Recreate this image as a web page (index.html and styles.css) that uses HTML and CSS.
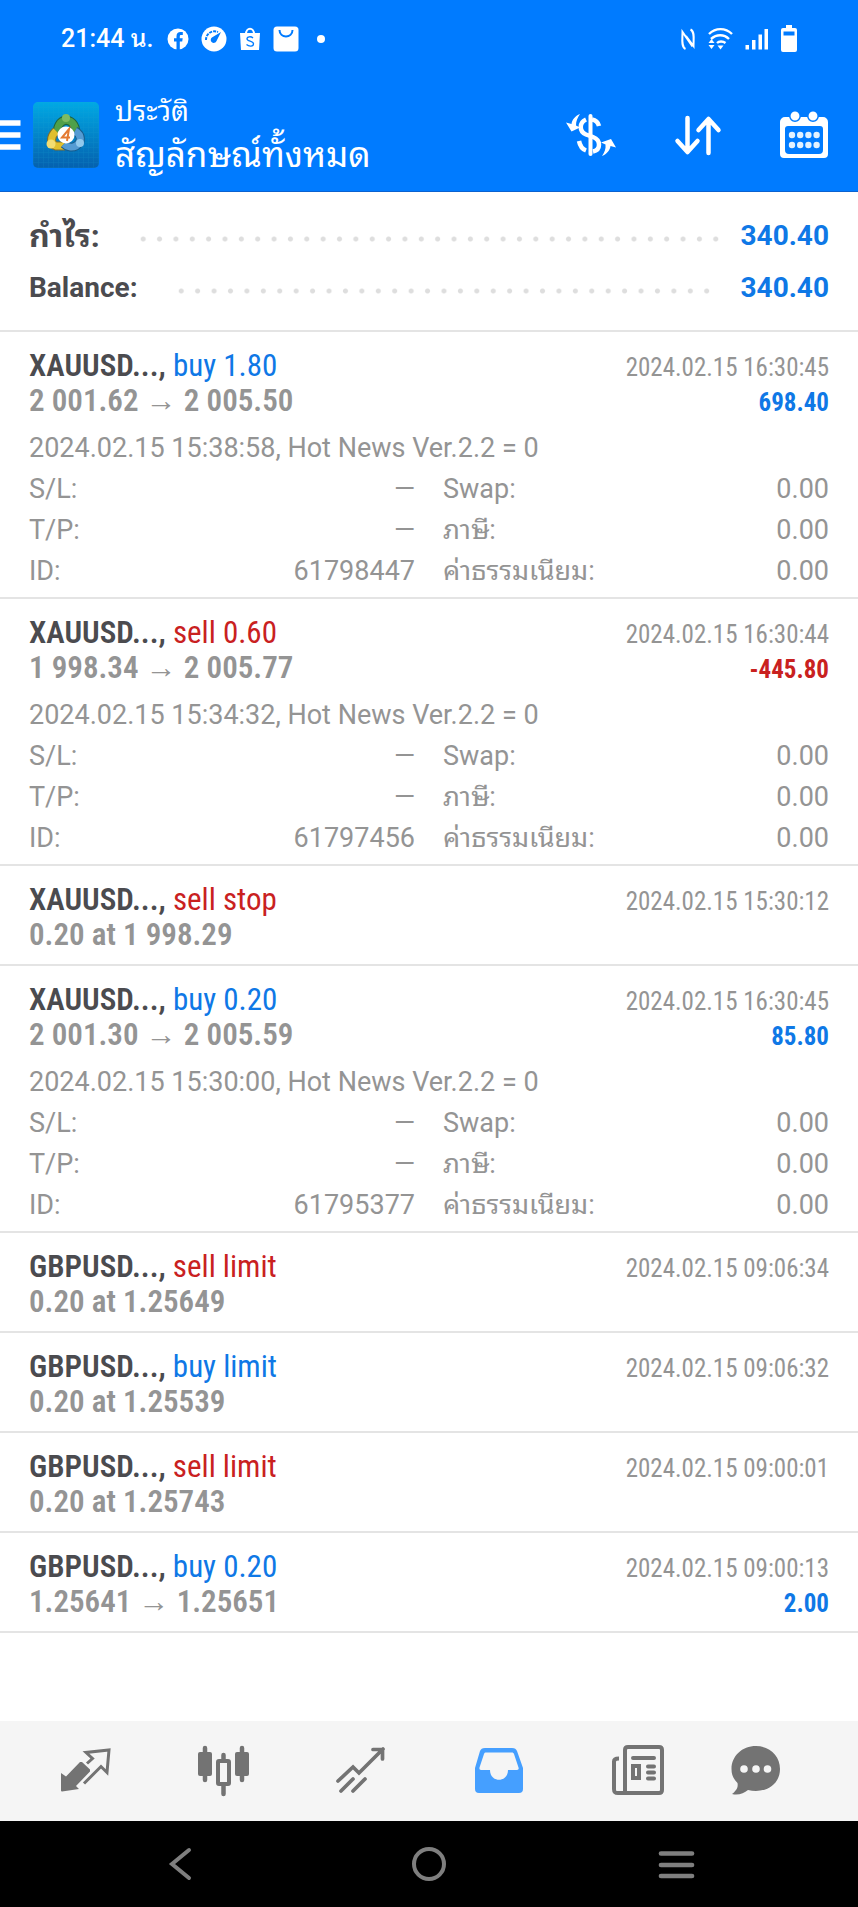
FILE: index.html
```
<!DOCTYPE html>
<html lang="th">
<head>
<meta charset="utf-8">
<meta name="viewport" content="width=device-width, initial-scale=1">
<title>ประวัติ</title>
<link rel="stylesheet" href="styles.css">
</head>
<body>
<header class="top">
  <div class="status">
    <span class="clock">21:44 น.</span>
    <div class="status-apps">
      <svg width="22" height="28" viewBox="0 0 22 28"><circle cx="11" cy="14" r="10.5" fill="#fff"/><path d="M9.500 25v-8.500H7v-3.200h2.500v-2c0-3 1.600-4.300 4-4.300h2.300v3H14.200c-1 0-1.400.5-1.400 1.400v1.900h2.900l-.5 3.200h-2.400V25z" fill="#007bff"/></svg>
      <svg width="26" height="28" viewBox="0 0 26 28"><circle cx="13" cy="14" r="12.500" fill="#fff"/><path d="M5 15a8.500 8.500 0 0 1 12-8" fill="none" stroke="#007bff" stroke-width="2" stroke-dasharray="3 1"/><path d="M20 7l-4.500 9a3 3 0 1 1-4.600-3.500z" fill="#007bff"/></svg>
      <svg width="22" height="28" viewBox="0 0 22 28"><path d="M7 9c0-7 8-7 8 0" fill="none" stroke="#fff" stroke-width="2"/><path d="M1 8h20l-1 17H2z" fill="#fff"/><path d="M14 13c-2-2-6-1.500-6 .8 0 2.800 6.500 2 6.500 5s-4.500 3-7 .8" fill="none" stroke="#007bff" stroke-width="1.300"/></svg>
      <svg width="26" height="28" viewBox="0 0 26 28"><rect x=".5" y="1.500" width="25" height="25" rx="3.500" fill="#fff"/><path d="M6.500 5c0 8.500 13 8.500 13 0" fill="none" stroke="#007bff" stroke-width="2"/></svg>
    </div>
    <span class="more-dot"></span>
    <div class="status-system">
      <svg width="14" height="28" viewBox="0 0 14 28"><path d="M4.500 24C0 22 1.500 14 1.500 7l10 14.500M9.500 4.500c4.500 2 3 9.500 3 16.500L5 11" fill="none" stroke="#fff" stroke-width="2"/></svg>
      <svg width="26" height="28" viewBox="0 0 26 28"><g fill="none" stroke="#fff" stroke-width="2.400"><path d="M2 9c6.500-6.500 16.500-6.500 23 0"/><path d="M4 14c5.500-5 13-5 18 0"/><path d="M10 18c2-2 6-2 8.500 0"/></g><path d="M10.500 20.500h6l-3 4zM1.500 18l3-4 3 4zM1.500 20h6l-3 4z" fill="#fff"/></svg>
      <svg width="24" height="28" viewBox="0 0 24 28"><path d="M.5 20h3.500v4.500H.5zM7 15h3.500v9.500H7zM13.500 9.500H17v15h-3.500zM19.500 4H23v20.500h-3.500z" fill="#fff"/></svg>
      <svg width="16" height="28" viewBox="0 0 16 28"><path d="M5 0h6v3h3a2 2 0 0 1 2 2v20a2 2 0 0 1-2 2H2a2 2 0 0 1-2-2V5a2 2 0 0 1 2-2h3z" fill="#fff"/><path d="M2.500 6.500h11v4h-11z" fill="#007bff"/></svg>
    </div>
  </div>
  <div class="toolbar">
    <button class="icon-btn" aria-label="เมนู"><svg width="21" height="32" viewBox="0 0 21 32"><path d="M0 4h20.500M0 16h20.500M0 28h20.500" stroke="#fff" stroke-width="5.500"/></svg></button>
    <svg class="logo" width="66" height="66" viewBox="0 0 66 66">
      <defs><linearGradient id="sky" x1="0" y1="0" x2="0" y2="1"><stop offset="0" stop-color="#00a9e4"/><stop offset="1" stop-color="#0560ae"/></linearGradient>
      <pattern id="mesh" width="5" height="5" patternUnits="userSpaceOnUse"><path d="M0 0h5M0 0v5" stroke="#1fa5cf" stroke-width="1" opacity=".25"/></pattern></defs>
      <rect width="66" height="66" rx="5" fill="url(#sky)"/><rect width="66" height="66" rx="5" fill="url(#mesh)"/>
      <path d="M25 33c-2-8 2-14 8-15 7 1 11 7 9 15" fill="none" stroke="#1e6340" stroke-width="9"/><path d="M25 33c-2-8 2-14 8-15 7 1 11 7 9 15" fill="none" stroke="#4fa04a" stroke-width="7"/>
      <path d="M23 29c-6 6-6 13 0 15h9" fill="none" stroke="#806e2c" stroke-width="9"/><path d="M23 29c-6 6-6 13 0 15h9" fill="none" stroke="#e0bf2e" stroke-width="7"/>
      <path d="M42 29c7 4 7 11 1 15-4 2-9 1-12-2" fill="none" stroke="#185c8a" stroke-width="9"/><path d="M42 29c7 4 7 11 1 15-4 2-9 1-12-2" fill="none" stroke="#549bd3" stroke-width="7"/>
      <circle cx="33" cy="16" r="4" fill="#7dbb62"/><circle cx="18" cy="42" r="4.500" fill="#f2dc72"/><circle cx="47" cy="41" r="4" fill="#91c9ed"/>
      <circle cx="33" cy="33" r="8.500" fill="#fff"/><path d="M34 39l2-12-7 8.500h8" fill="none" stroke="#e47a32" stroke-width="2"/>
    </svg>
    <div class="heading">
      <span class="screen">ประวัติ</span>
      <h1 class="scope">สัญลักษณ์ทั้งหมด</h1>
    </div>
    <div class="actions">
      <button class="icon-btn" aria-label="กำไร"><svg width="50" height="48" viewBox="0 0 50 48"><path d="M24.500 5v38" stroke="#fff" stroke-width="4" stroke-linecap="round"/><path d="M33 15c-1-4-4-6-7-6.500M20 8.500c-7 3-7 12 0 15l7 2.500c8 3 8 13 0 14.500M13 30c1 5 3 8 7 9.500" fill="none" stroke="#fff" stroke-width="4.500"/><path d="M14 3C9 5 6 9 5.500 13L0 11.500 5.500 20.500 14 16.500 10 14.500C10 10 11.500 7 14 3zM36 45c5-2 8-6 8.500-10L50 36.500 45 28l-10 3.500 4.500 2C40 38 38.500 41 36 45z" fill="#fff"/></svg></button>
      <button class="icon-btn" aria-label="เรียงลำดับ"><svg width="46" height="48" viewBox="0 0 46 48"><path d="M12.500 7v33M2.500 30l10 11 10-11M33.500 42V9M23.500 19l10-11 10 11" fill="none" stroke="#fff" stroke-width="4.500" stroke-linecap="round" stroke-linejoin="round"/></svg></button>
      <button class="icon-btn" aria-label="ปฏิทิน"><svg width="48" height="48" viewBox="0 0 48 48"><path d="M5 6h38a5 5 0 0 1 5 5v32a4 4 0 0 1-4 4H4a4 4 0 0 1-4-4V11a5 5 0 0 1 5-5zM8 15a3 3 0 0 0-3 3v21a4 4 0 0 0 4 4h30a4 4 0 0 0 4-4V18a3 3 0 0 0-3-3z" fill="#fff" fill-rule="evenodd"/><g fill="#fff" stroke="#007bff" stroke-width="1.500"><circle cx="15" cy="5" r="5.200"/><circle cx="33" cy="5" r="5.200"/></g><path d="M12 24h25M12 34h25" stroke="#e2f1ff" stroke-width="6.400" stroke-linecap="round" stroke-dasharray="0 8.200"/></svg></button>
    </div>
  </div>
</header>

<main class="content">
  <dl class="summary">
    <div class="sum-row"><dt class="thai">กำไร:</dt><dd class="dots dots-profit"></dd><dd class="total">340.40</dd></div>
    <div class="sum-row"><dt>Balance:</dt><dd class="dots dots-balance"></dd><dd class="total">340.40</dd></div>
  </dl>

  <ul class="deals">
    <li class="deal deal-open">
      <div class="line"><span class="name"><b>XAUUSD...,</b> <span class="buy">buy 1.80</span></span><time class="time">2024.02.15 16:30:45</time></div>
      <div class="line"><span class="price">2 001.62 <span class="arrow">→</span> 2 005.50</span><span class="profit buy">698.40</span></div>
      <p class="note">2024.02.15 15:38:58, Hot News Ver.2.2 = 0</p>
      <dl class="facts">
        <div><dt>S/L:</dt><dd>—</dd></div><div><dt>Swap:</dt><dd>0.00</dd></div>
        <div><dt>T/P:</dt><dd>—</dd></div><div><dt>ภาษี:</dt><dd>0.00</dd></div>
        <div><dt>ID:</dt><dd>61798447</dd></div><div><dt>ค่าธรรมเนียม:</dt><dd>0.00</dd></div>
      </dl>
    </li>
    <li class="deal deal-open">
      <div class="line"><span class="name"><b>XAUUSD...,</b> <span class="sell">sell 0.60</span></span><time class="time">2024.02.15 16:30:44</time></div>
      <div class="line"><span class="price">1 998.34 <span class="arrow">→</span> 2 005.77</span><span class="profit sell">-445.80</span></div>
      <p class="note">2024.02.15 15:34:32, Hot News Ver.2.2 = 0</p>
      <dl class="facts">
        <div><dt>S/L:</dt><dd>—</dd></div><div><dt>Swap:</dt><dd>0.00</dd></div>
        <div><dt>T/P:</dt><dd>—</dd></div><div><dt>ภาษี:</dt><dd>0.00</dd></div>
        <div><dt>ID:</dt><dd>61797456</dd></div><div><dt>ค่าธรรมเนียม:</dt><dd>0.00</dd></div>
      </dl>
    </li>
    <li class="deal">
      <div class="line"><span class="name"><b>XAUUSD...,</b> <span class="sell">sell stop</span></span><time class="time">2024.02.15 15:30:12</time></div>
      <div class="line"><span class="price">0.20 at 1 998.29</span></div>
    </li>
    <li class="deal deal-open">
      <div class="line"><span class="name"><b>XAUUSD...,</b> <span class="buy">buy 0.20</span></span><time class="time">2024.02.15 16:30:45</time></div>
      <div class="line"><span class="price">2 001.30 <span class="arrow">→</span> 2 005.59</span><span class="profit buy">85.80</span></div>
      <p class="note">2024.02.15 15:30:00, Hot News Ver.2.2 = 0</p>
      <dl class="facts">
        <div><dt>S/L:</dt><dd>—</dd></div><div><dt>Swap:</dt><dd>0.00</dd></div>
        <div><dt>T/P:</dt><dd>—</dd></div><div><dt>ภาษี:</dt><dd>0.00</dd></div>
        <div><dt>ID:</dt><dd>61795377</dd></div><div><dt>ค่าธรรมเนียม:</dt><dd>0.00</dd></div>
      </dl>
    </li>
    <li class="deal">
      <div class="line"><span class="name"><b>GBPUSD...,</b> <span class="sell">sell limit</span></span><time class="time">2024.02.15 09:06:34</time></div>
      <div class="line"><span class="price">0.20 at 1.25649</span></div>
    </li>
    <li class="deal">
      <div class="line"><span class="name"><b>GBPUSD...,</b> <span class="buy">buy limit</span></span><time class="time">2024.02.15 09:06:32</time></div>
      <div class="line"><span class="price">0.20 at 1.25539</span></div>
    </li>
    <li class="deal">
      <div class="line"><span class="name"><b>GBPUSD...,</b> <span class="sell">sell limit</span></span><time class="time">2024.02.15 09:00:01</time></div>
      <div class="line"><span class="price">0.20 at 1.25743</span></div>
    </li>
    <li class="deal">
      <div class="line"><span class="name"><b>GBPUSD...,</b> <span class="buy">buy 0.20</span></span><time class="time">2024.02.15 09:00:13</time></div>
      <div class="line"><span class="price">1.25641 <span class="arrow">→</span> 1.25651</span><span class="profit buy">2.00</span></div>
    </li>
  </ul>
</main>

<nav class="tabs">
  <button class="tab" aria-label="ราคา"><svg width="52" height="52" viewBox="0 0 52 52"><path d="M2 28l5 3.500L21 17l2 0 8 7.500v2L17 41l3 3-17 2.500a1 1 0 0 1-1-1z" fill="currentColor"/><path d="M28 18.500l5.500-5-6.500-6L50 5l-2 22.500-6-6L25 38.500" fill="none" stroke="currentColor" stroke-width="3"/></svg></button>
  <button class="tab" aria-label="ชาร์ต"><svg width="52" height="52" viewBox="0 0 52 52"><path d="M8 3v32M45 3v32M26.500 10v5M26.500 40v9" stroke="currentColor" stroke-width="4.500" stroke-linecap="round"/><rect x="1" y="7" width="14" height="24" rx="2" fill="currentColor"/><rect x="38" y="7" width="14" height="24" rx="2" fill="currentColor"/><rect x="21" y="16" width="11" height="23" rx="1" fill="none" stroke="currentColor" stroke-width="4"/></svg></button>
  <button class="tab" aria-label="เทรด"><svg width="52" height="52" viewBox="0 0 52 52"><path d="M3 36l15-14 6 6L48 4M38 4.500h9.500V14M6 46l12-12M18 46l12-12" fill="none" stroke="currentColor" stroke-width="3.700" stroke-linecap="round"/></svg></button>
  <button class="tab tab-active" aria-label="ประวัติ"><svg width="52" height="52" viewBox="0 0 52 52"><path d="M12 3h27c3 0 4 1 5 3l6 17v21a4 4 0 0 1-4 4H6a4 4 0 0 1-4-4V23L7 6c1-2 2-3 5-3zM13 7.500c-1 0-1.500.4-2 1.500L6.500 22.500c-.3 1.500.2 2.500 1.500 2.500h9c0 13 18 13 18 0h9c1.500 0 2-1 1.500-2.500L41 9c-.5-1-1-1.500-2-1.500z" fill="currentColor" fill-rule="evenodd"/></svg></button>
  <button class="tab" aria-label="ข่าว"><svg width="52" height="52" viewBox="0 0 52 52"><g fill="none" stroke="currentColor" stroke-width="4"><path d="M8 13.500c-3 0-5 .5-5 3V44c0 3 1 4 4 4h41c2 0 3-1 3-3V5c0-2-1-3-3-3H17c-2 0-3 1-3 3v43"/><path d="M22 13h21M37 21.500h6M37 27.500h6M37 33.500h6" stroke-linecap="round"/><rect x="22" y="21" width="6" height="12"/></g></svg></button>
  <button class="tab" aria-label="ข้อความ"><svg width="52" height="52" viewBox="0 0 52 52"><path d="M27 1C13 1 2.500 11 2.500 24c0 6 2 10 6 14 1 5-2 8-5.500 11 6 1.500 12-.5 16-4 17 4 32-5 32-21C51 11 41 1 27 1z" fill="currentColor"/><g fill="#f5f5f5"><circle cx="15" cy="24" r="3.800"/><circle cx="27" cy="24" r="3.800"/><circle cx="38.500" cy="24" r="3.800"/></g></svg></button>
</nav>
<footer class="system">
  <button class="sys" aria-label="กลับ"><svg width="40" height="40" viewBox="0 0 40 40"><path d="M28 6L11 20l17 14" fill="none" stroke="currentColor" stroke-width="4" stroke-linecap="round"/></svg></button>
  <button class="sys" aria-label="หน้าหลัก"><svg width="40" height="40" viewBox="0 0 40 40"><circle cx="20" cy="20" r="15" fill="none" stroke="currentColor" stroke-width="4"/></svg></button>
  <button class="sys" aria-label="แอปล่าสุด"><svg width="40" height="40" viewBox="0 0 40 40"><path d="M4 9.500h31M4 21h31M4 32h31" stroke="currentColor" stroke-width="4.700" stroke-linecap="round"/></svg></button>
</footer>
</body>
</html>
```

FILE: styles.css
```
* { box-sizing: border-box; }

body {
  margin: 0;
  min-height: 100vh;
  display: flex;
  flex-direction: column;
  background: #fff;
  color: #949494;
  font-family: Roboto, "Noto Sans Thai Looped", Loma, Garuda, Waree, "Noto Sans", sans-serif;
  font-size: 25px;
}

svg { display: block; overflow: visible; }
button { border: 0; padding: 0; background: none; color: inherit; }
dl, dd, ul, p, h1 { margin: 0; padding: 0; }

.top { background: #007bff; color: #fff; border-bottom: 1px solid #0b62d0; }

.status {
  height: 78px;
  display: flex;
  align-items: center;
  padding: 0 61px;
}
.clock { font-size: 25px; font-weight: 500; line-height: 28px; min-width: 106px; }
.status-apps { display: flex; gap: 12px; }
.more-dot { width: 8px; height: 8px; border-radius: 50%; background: #fff; margin-left: 18px; }
.status-system { display: flex; gap: 12px; margin-left: auto; }

.toolbar {
  height: 113px;
  display: flex;
  align-items: center;
  padding-right: 30px;
}
.logo { margin-left: 12px; }
.heading { margin-left: 16px; padding-top: 3px; display: flex; flex-direction: column; }
.screen { font-size: 28px; line-height: 40px; }
.scope { font-size: 35px; line-height: 48px; font-weight: 400; }
.actions { margin-left: auto; display: flex; gap: 59px; }

.content { flex: 1; }

.summary { padding: 18px 29px 16px; border-bottom: 2px solid #e4e4e4; }
.sum-row { display: flex; height: 52px; align-items: center; font-weight: 700; font-size: 28px; line-height: 52px; }
.sum-row dt { color: #4b4b4f; }
.sum-row .thai { font-size: 32px; }
.total { color: #0f78e6; }
.dots {
  flex: 1;
  height: 6px;
  margin: 6px 17px 0 35px;
  background: radial-gradient(circle, #dedede 2px, transparent 3px) repeat-x;
  background-size: calc(100% / 36) 6px;
}
.dots-balance { margin-right: 26px; background-size: calc(100% / 33) 6px; }

.deals { list-style: none; }
.deal { padding: 16px 29px 12px; border-bottom: 2px solid #e4e4e4; }
.deal-open { padding-bottom: 5px; }
.line {
  display: flex;
  justify-content: space-between;
  align-items: baseline;
  height: 35px;
  line-height: 35px;
  font-family: "Roboto Condensed", "Liberation Sans Narrow", Roboto, sans-serif;
  white-space: nowrap;
}
.name, .price { font-size: 31px; }
.name b { color: #4b4b4f; font-weight: 600; }
.price { font-weight: 600; }
.arrow { font-weight: 400; }
.profit { font-weight: 700; }
.buy { color: #0f78e6; }
.sell { color: #c9211f; }

.note { margin-top: 10px; font-size: 27px; line-height: 41px; }
.facts { display: grid; grid-template-columns: 1fr 1fr; column-gap: 28px; font-size: 27px; }
.facts div { display: flex; justify-content: space-between; height: 41px; line-height: 41px; }

.tabs { display: flex; height: 100px; background: #f5f5f5; padding: 0 54px 0 16px; color: #737373; }
.tab { flex: 138; display: flex; align-items: center; justify-content: center; }
.tab:last-child { flex: 98; }
.tab-active { color: #459fff; }

.system { display: grid; grid-template-columns: repeat(3, 1fr); height: 86px; padding: 0 57px; background: #000; color: #7f7f7f; }
.sys { display: flex; align-items: center; justify-content: center; }
```
